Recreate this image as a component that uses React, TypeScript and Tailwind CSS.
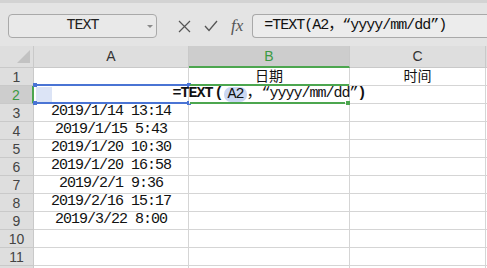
import React from 'react';

const mono = "font-['Liberation_Mono','Noto_Sans_CJK_SC',monospace]";
const sans = "font-['Liberation_Sans','Noto_Sans_CJK_SC',sans-serif]";

const dates: Record<number, string> = {
  3: '2019/1/14 13:14',
  4: '2019/1/15 5:43',
  5: '2019/1/20 10:30',
  6: '2019/1/20 16:58',
  7: '2019/2/1 9:36',
  8: '2019/2/16 15:17',
  9: '2019/3/22 8:00',
};

function Toolbar() {
  return (
    <div className="h-[46px] bg-[#e4e4e4] border-t-[3px] border-[#d3d3d3] flex items-start pt-[11px]">
      {/* name box */}
      <div className="ml-2 w-[149px] h-[24px] rounded-[4px] border border-[#a9a9a9] bg-[#e9e9e9] relative flex items-center justify-center">
        <span className={`${mono} text-[15px] tracking-[-1px] text-[#222]`}>TEXT</span>
        <span className="absolute right-[3px] top-[10px] w-0 h-0 border-l-[3px] border-r-[3px] border-t-[3px] border-l-transparent border-r-transparent border-t-[#8a8a8a]" />
      </div>

      {/* cancel / confirm / fx */}
      <div className="flex items-center h-[24px] ml-[21px] gap-[13px] text-[#555]">
        <svg width="13" height="13" viewBox="0 0 13 13">
          <path d="M1 1 L12 12 M12 1 L1 12" stroke="#555" strokeWidth="1.2" fill="none" />
        </svg>
        <svg width="14" height="12" viewBox="0 0 14 12">
          <path d="M1 6 L5 10.5 L13 1" stroke="#555" strokeWidth="1.3" fill="none" />
        </svg>
        <span className="font-['Liberation_Serif',serif] italic text-[17px] leading-none text-[#555] -mt-[2px]">fx</span>
      </div>

      {/* formula input */}
      <div className="ml-[9px] flex-1 h-[24px] rounded-l-[4px] border border-r-0 border-[#a9a9a9] bg-[#ececec] flex items-center pl-[11px]">
        <span className={`${mono} text-[15px] tracking-[-1px] text-[#111] whitespace-nowrap`}>
          =TEXT(A2，“yyyy/mm/dd”)
        </span>
      </div>
    </div>
  );
}

function ColHeader({ label, active }: { label: string; active?: boolean }) {
  return (
    <div
      className={`${sans} h-[22px] border-r border-[#c9c9c9] flex items-center justify-center text-[14px] ${
        active ? 'bg-[#cdcdcd] border-b-2 border-b-[#4ca64f] text-[#3c9a43]' : 'bg-[#dedede] border-b border-b-[#c9c9c9] text-[#333]'
      }`}
    >
      {label}
    </div>
  );
}

function RowHeader({ n, active }: { n?: number; active?: boolean }) {
  return (
    <div
      className={`${sans} h-[18px] border-b border-[#c9c9c9] flex items-center justify-center text-[14px] leading-none ${
        active ? 'bg-[#cdcdcd] border-r-2 border-r-[#4ca64f] text-[#3c9a43]' : 'bg-[#dedede] border-r border-r-[#c9c9c9] text-[#444]'
      }`}
    >
      {n}
    </div>
  );
}

function Cell({ children, className = '' }: { children?: React.ReactNode; className?: string }) {
  return (
    <div className={`h-[18px] bg-white border-r border-b border-[#d5d5d5] flex items-center justify-center whitespace-nowrap ${className}`}>
      {children}
    </div>
  );
}

export default function App() {
  const rowNums = [1, 2, 3, 4, 5, 6, 7, 8, 9, 10, 11, 12];

  return (
    <div className="w-[487px] h-[268px] overflow-hidden bg-[#e4e4e4]">
      <Toolbar />

      <div className="grid grid-cols-[34px_155px_161px_136px_1fr]">
        {/* corner */}
        <div className="h-[22px] bg-[#dedede] border-r border-b border-[#c9c9c9] flex items-end justify-end pr-[3px] pb-[4px]">
          <svg width="13" height="13" viewBox="0 0 13 13">
            <polygon points="13,0 13,13 0,13" fill="#c2c2c2" />
          </svg>
        </div>
        <ColHeader label="A" />
        <ColHeader label="B" active />
        <ColHeader label="C" />
        <div className="h-[22px] bg-[#dedede] border-b border-[#c9c9c9]" />

        {rowNums.map((n) => {
          if (n === 1) {
            return (
              <React.Fragment key={n}>
                <RowHeader n={n} />
                <Cell />
                <Cell className={`${sans} text-[14px] text-[#111]`}>日期</Cell>
                <Cell className={`${sans} text-[14px] text-[#111]`}>时间</Cell>
                <div className="h-[18px] bg-white border-b border-[#d5d5d5]" />
              </React.Fragment>
            );
          }
          if (n === 2) {
            return (
              <React.Fragment key={n}>
                <RowHeader n={n} active />
                <div className="h-[18px] bg-white border-r border-b border-[#d5d5d5] relative">
                  <span className="absolute left-[2px] top-[1px] w-[16px] h-[15px] bg-[#dce4f6]" />
                  <span className="absolute left-[1px] right-0 -top-[2px] h-[2px] bg-[#4a74d4]" />
                  <span className="absolute left-[1px] right-0 -bottom-[1px] h-[2px] bg-[#4a74d4]" />
                  <span className="absolute -left-[1px] -top-[3px] w-[4px] h-[4px] bg-[#4a74d4]" />
                  <span className="absolute -left-[1px] -bottom-[2px] w-[4px] h-[4px] bg-[#4a74d4]" />
                  <span className="absolute -right-[3px] -top-[3px] w-[4px] h-[4px] bg-[#4a74d4]" />
                  <span className="absolute -right-[3px] -bottom-[2px] w-[4px] h-[4px] bg-[#4a74d4]" />
                </div>
                <div className="h-[18px] bg-white border-r border-b border-[#d5d5d5] relative flex items-center justify-center whitespace-nowrap">
                  <span className="absolute left-[1px] right-0 -top-[2px] h-[2px] bg-[#4ca64f]" />
                  <span className="absolute left-[1px] right-[4px] -bottom-[1px] h-[2px] bg-[#4ca64f]" />
                  <span className="absolute -right-[1px] -bottom-[2px] w-[4px] h-[4px] bg-[#4ca64f]" />
                  <span className={`${mono} text-[15px] tracking-[-1px] text-[#111] flex items-center`}>
                    <b>=TEXT</b>
                    <b className="mx-[2px]">(</b>
                    <span className="bg-[#cbd7f3] rounded-[7px] px-[3px] leading-[15px]">A2</span>
                    <span className="mr-[1px]">，</span>
                    <span>“yyyy/mm/dd”</span>
                    <b>)</b>
                  </span>
                </div>
                <Cell />
                <div className="h-[18px] bg-white border-b border-[#d5d5d5]" />
              </React.Fragment>
            );
          }
          return (
            <React.Fragment key={n}>
              <RowHeader n={n < 12 ? n : undefined} />
              <Cell className={`${mono} text-[15px] tracking-[-1px] text-[#111]`}>{dates[n] ?? ''}</Cell>
              <Cell />
              <Cell />
              <div className="h-[18px] bg-white border-b border-[#d5d5d5]" />
            </React.Fragment>
          );
        })}
      </div>
    </div>
  );
}
